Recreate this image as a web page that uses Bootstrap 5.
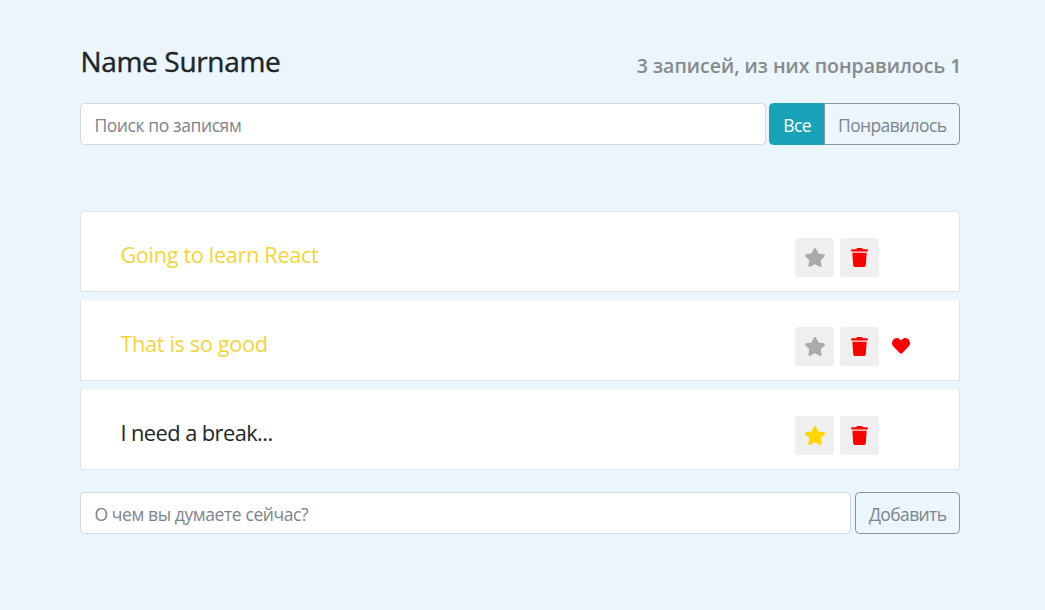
<!DOCTYPE html>
<html lang="ru">
<head>
<meta charset="utf-8">
<meta name="viewport" content="width=device-width, initial-scale=1">
<title>Name Surname</title>
<link href="https://cdn.jsdelivr.net/npm/bootstrap@5.3.0/dist/css/bootstrap.min.css" rel="stylesheet">
<style>
body{background:#eaf5fc;font-family:"Open Sans","Noto Sans",sans-serif;font-size:17.5px;color:#212529}
.app{width:880px;margin-left:80.4px;padding-top:42px}
.app-header{height:61px}
.app-header h1{font-size:28px;line-height:39px;font-weight:500;letter-spacing:-.32px;-webkit-text-stroke:.4px #212529}
.app-header h2{font-size:19.5px;line-height:40px;font-weight:600;color:#868a8d;margin-right:-1px}
.bar{gap:3.5px}
.field{height:42px;font-size:17.5px;line-height:26px;padding:1px 13px 0;letter-spacing:-.4px;border-color:#d3dae0;border-radius:4.5px}
.field::placeholder{color:#7d848a;opacity:1}
.action{height:42px;font-size:17.5px;line-height:40px;padding:1px 13px 0;letter-spacing:-.62px;border-radius:4.5px;--bs-btn-color:#7d868d;--bs-btn-border-color:#89929a}
.action-on{--bs-btn-color:#fff;--bs-btn-bg:#17a2b8;--bs-btn-border-color:#17a2b8}
.posts{margin-top:66px}
.post{height:81px;margin-bottom:8px;padding:0 80px 0 39px;background:#fff;border:1px solid #dfe4e7}
.post+.post{border-top-color:#f3f7fa}
.post:first-child{border-radius:4.5px 4.5px 0 0}
.post:last-child{border-radius:0 0 4.5px 4.5px;margin-bottom:0}
.post-text{font-size:21.8px;line-height:30px;margin-top:28px;letter-spacing:-.38px}
.post:last-child .post-text{letter-spacing:-.55px}
.liked-text{color:#f2d539}
.tool{width:39px;height:39px;background:#efefef;border:0;border-radius:3px;padding:0;color:#aaa}
.tools{gap:6px;margin-top:26px;position:relative}
.trash{color:red}.gold{color:#ffd500}
.heart{position:absolute;left:97px;top:10px;color:red}
svg{fill:currentColor;display:block}
.new-post{margin-top:22px}
</style>
</head>
<body>
<svg class="d-none">
<symbol id="star" viewBox="0 0 576 512"><path d="M259.300 17.800L194 150.200 47.900 171.500c-26.200 3.800-36.700 36.100-17.700 54.600l105.700 103-25 145.500c-4.500 26.300 23.200 46 46.400 33.700L288 439.600l130.700 68.700c23.200 12.200 50.900-7.400 46.400-33.700l-25-145.500 105.700-103c19-18.500 8.500-50.800-17.700-54.600L382 150.200 316.700 17.800c-11.700-23.600-45.600-23.900-57.400 0z"/></symbol>
<symbol id="trash" viewBox="0 0 448 512"><path d="M432 32H312l-9.400-18.700A24 24 0 0 0 281.100 0H166.800a23.720 23.720 0 0 0-21.400 13.300L136 32H16A16 16 0 0 0 0 48v32a16 16 0 0 0 16 16h416a16 16 0 0 0 16-16V48a16 16 0 0 0-16-16zM53.200 467a48 48 0 0 0 47.900 45h245.800a48 48 0 0 0 47.900-45L416 128H32z"/></symbol>
<symbol id="heart" viewBox="0 0 512 512"><path d="M462.300 62.600C407.500 15.900 326 24.300 275.700 76.200L256 96.500l-19.700-20.300C186.100 24.300 104.500 15.900 49.700 62.600c-62.800 53.600-66.100 149.800-9.900 207.900l193.500 199.800c12.500 12.900 32.800 12.900 45.300 0l193.500-199.800c56.300-58.100 53-154.300-9.800-207.900z"/></symbol>
</svg>
<main class="app">
  <header class="app-header d-flex justify-content-between">
    <h1 class="mb-0">Name Surname</h1>
    <h2 class="mb-0 mt-1">3 записей, из них понравилось 1</h2>
  </header>
  <div class="bar d-flex">
    <input class="form-control field" type="text" placeholder="Поиск по записям">
    <div class="btn-group flex-shrink-0">
      <button class="btn action action-on">Все</button>
      <button class="btn action">Понравилось</button>
    </div>
  </div>
  <ul class="posts list-unstyled mb-0">
    <li class="post d-flex justify-content-between">
      <span class="post-text liked-text">Going to learn React</span>
      <div class="tools d-flex">
        <button class="tool d-flex align-items-center justify-content-center"><svg width="22" height="19"><use href="#star"/></svg></button>
        <button class="tool trash d-flex align-items-center justify-content-center"><svg width="17" height="19"><use href="#trash"/></svg></button>
      </div>
    </li>
    <li class="post d-flex justify-content-between">
      <span class="post-text liked-text">That is so good</span>
      <div class="tools d-flex">
        <button class="tool d-flex align-items-center justify-content-center"><svg width="22" height="19"><use href="#star"/></svg></button>
        <button class="tool trash d-flex align-items-center justify-content-center"><svg width="17" height="19"><use href="#trash"/></svg></button>
        <svg class="heart" width="18" height="18"><use href="#heart"/></svg>
      </div>
    </li>
    <li class="post d-flex justify-content-between">
      <span class="post-text">I need a break...</span>
      <div class="tools d-flex">
        <button class="tool gold d-flex align-items-center justify-content-center"><svg width="22" height="19"><use href="#star"/></svg></button>
        <button class="tool trash d-flex align-items-center justify-content-center"><svg width="17" height="19"><use href="#trash"/></svg></button>
      </div>
    </li>
  </ul>
  <form class="new-post bar d-flex">
    <input class="form-control field" type="text" placeholder="О чем вы думаете сейчас?">
    <button type="button" class="btn action flex-shrink-0">Добавить</button>
  </form>
</main>
<script src="https://cdn.jsdelivr.net/npm/bootstrap@5.3.0/dist/js/bootstrap.bundle.min.js"></script>
</body>
</html>
